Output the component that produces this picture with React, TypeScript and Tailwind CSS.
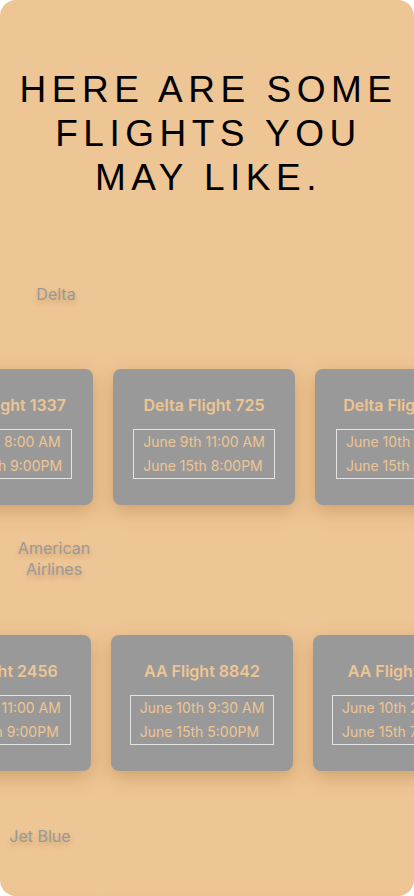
import React from 'react';

type Flight = {
  name: string;
  depart: string;
  ret: string;
};

type Airline = {
  label: string;
  labelClass: string;
  rowClass: string;
  flights: Flight[];
};

const airlines: Airline[] = [
  {
    label: 'Delta',
    labelClass: 'ml-[36px] mt-[84px] w-[40px]',
    rowClass: 'mt-[64px] pr-[6px]',
    flights: [
      { name: 'Delta Flight 1337', depart: 'June 8th 8:00 AM', ret: 'June 14th 9:00PM' },
      { name: 'Delta Flight 725', depart: 'June 9th 11:00 AM', ret: 'June 15th 8:00PM' },
      { name: 'Delta Flight 1102', depart: 'June 10th 7:15 AM', ret: 'June 15th 6:30PM' },
    ],
  },
  {
    label: 'American Airlines',
    labelClass: 'ml-[14px] mt-[33px] w-[80px]',
    rowClass: 'mt-[55px] pr-[10px]',
    flights: [
      { name: 'AA Flight 2456', depart: 'June 9th 11:00 AM', ret: 'June 15th 9:00PM' },
      { name: 'AA Flight 8842', depart: 'June 10th 9:30 AM', ret: 'June 15th 5:00PM' },
      { name: 'AA Flight 3310', depart: 'June 10th 2:45 PM', ret: 'June 15th 7:00PM' },
    ],
  },
  {
    label: 'Jet Blue',
    labelClass: 'ml-[0px] mt-[55px] w-[80px]',
    rowClass: 'mt-[55px] pr-[8px]',
    flights: [
      { name: 'JetBlue Flight 617', depart: 'June 9th 6:00 AM', ret: 'June 15th 4:00PM' },
      { name: 'JetBlue Flight 204', depart: 'June 9th 1:00 PM', ret: 'June 15th 8:00PM' },
      { name: 'JetBlue Flight 988', depart: 'June 10th 5:00 AM', ret: 'June 15th 3:00PM' },
    ],
  },
];

const FlightCard: React.FC<{ flight: Flight }> = ({ flight }) => (
  <div className="w-[182px] h-[136px] shrink-0 rounded-[8px] bg-[#999999] shadow-[0_6px_18px_rgba(150,100,40,0.35)] flex flex-col items-center pt-[26px]">
    <h3 className="text-[16px] leading-[20px] font-semibold text-[#eec594] whitespace-nowrap">
      {flight.name}
    </h3>
    <div className="mt-[14px] border border-[#e4e4e4] px-[9px] text-[14px] leading-[24px] text-[#eec594] whitespace-nowrap">
      <p>{flight.depart}</p>
      <p>{flight.ret}</p>
    </div>
  </div>
);

export default function App() {
  return (
    <div className="min-h-screen bg-white font-['Inter','Noto_Sans',sans-serif]">
      <div className="h-[896px] overflow-hidden rounded-[16px] bg-[#eec594]">
        {/* Header */}
        <h1 className="pt-[68px] text-center text-[37px] leading-[44px] tracking-[5.5px] pl-[3px] text-black font-['Liberation_Sans','Arial',sans-serif]">
          HERE ARE SOME
          <br />
          FLIGHTS YOU
          <br />
          MAY LIKE.
        </h1>

        {airlines.map((airline) => (
          <section key={airline.label}>
            <p
              className={`${airline.labelClass} text-center text-[16px] leading-[21px] text-[#999999] [text-shadow:0_3px_5px_rgba(120,80,30,0.25)]`}
            >
              {airline.label}
            </p>
            <div className={`${airline.rowClass} flex justify-center gap-[20px]`}>
              {airline.flights.map((flight) => (
                <FlightCard key={flight.name} flight={flight} />
              ))}
            </div>
          </section>
        ))}
      </div>
    </div>
  );
}
